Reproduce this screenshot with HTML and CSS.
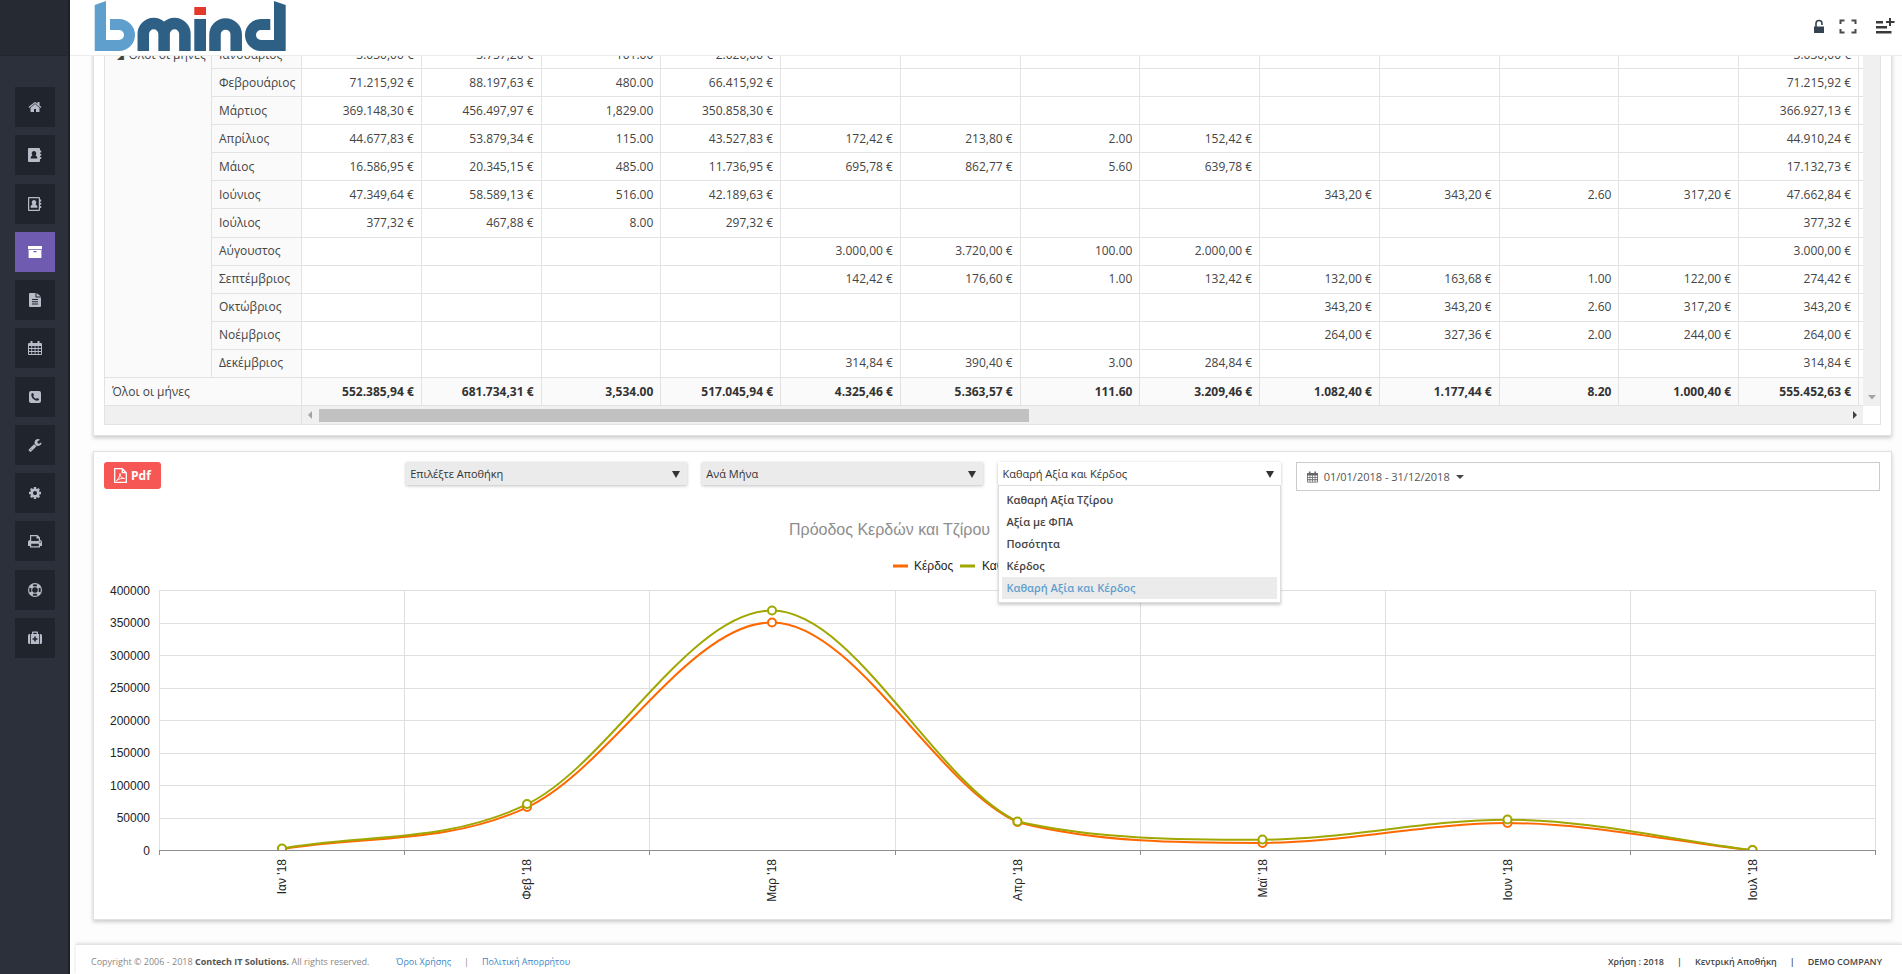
FILE: index.html
```
<!DOCTYPE html>
<html lang="el">
<head>
  <meta charset="utf-8">
  <title>bmind</title>
  <link rel="stylesheet" href="styles.css">
</head>
<body>
  <div class="page">
    <nav class="sidebar">
      <div class="sidebar-top"></div>
      <ul class="menu">
        <li><a href="#" aria-label="Αρχική"><svg viewBox="0 0 1792 1792"><path d="M1472 992v480q0 26-19 45t-45 19h-384v-384h-256v384h-384q-26 0-45-19t-19-45v-480q0-1 .5-3t.5-3l575-474 575 474q1 2 1 6zm223-69l-62 74q-8 9-21 11h-3q-13 0-21-7l-692-577-692 577q-12 8-24 7-13-2-21-11l-62-74q-8-10-7-23.5t11-21.5l719-599q32-26 76-26t76 26l244 204v-195q0-14 9-23t23-9h192q14 0 23 9t9 23v408l219 182q10 8 11 21.5t-7 23.5z"/></svg></a></li>
        <li><a href="#" aria-label="Πελάτες"><svg viewBox="0 0 14 14"><path fill-rule="evenodd" d="M1 0h10a1 1 0 0 1 1 1v1.500h1.200v2H12v1.200h1.200v2H12v1.300h1.200v2H12V13a1 1 0 0 1-1 1H1a1 1 0 0 1-1-1V1a1 1 0 0 1 1-1zM6 3a2.200 2.500 0 0 0-1.500 4.400C3.200 7.800 2.700 8.800 2.700 10.500h6.600c0-1.700-.5-2.700-1.800-3.100A2.200 2.500 0 0 0 6 3z"/></svg></a></li>
        <li><a href="#" aria-label="Προμηθευτές"><svg viewBox="0 0 14 14"><path fill-rule="evenodd" d="M1 0h10a1 1 0 0 1 1 1v1.500h1.200v2H12v1.200h1.200v2H12v1.300h1.200v2H12V13a1 1 0 0 1-1 1H1a1 1 0 0 1-1-1V1a1 1 0 0 1 1-1zM1.200 1.200v11.600h9.600V1.200z"/><path d="M6 3a2.200 2.500 0 0 0-1.500 4.400C3.200 7.800 2.500 8.800 2.500 10.800h7c0-2-.7-3-2-3.400A2.200 2.500 0 0 0 6 3z"/></svg></a></li>
        <li class="active"><a href="#" aria-label="Αποθήκη"><svg viewBox="0 0 14 14"><path fill-rule="evenodd" d="M0 1h14v3.200H0zM.6 5h12.800v8H.6zM5.500 6v1.200h3V6z"/></svg></a></li>
        <li><a href="#" aria-label="Παραστατικά"><svg viewBox="0 0 14 14"><path fill-rule="evenodd" d="M2 0h5.500v4.500H13V13a1 1 0 0 1-1 1H2a1 1 0 0 1-1-1V1a1 1 0 0 1 1-1zM4 6v1h6V6zm0 2.300v1h6v-1zm0 2.300v1h6v-1z"/><path d="M8.500 0L13 3.500H8.500z"/></svg></a></li>
        <li><a href="#" aria-label="Ημερολόγιο"><svg viewBox="0 0 14 14"><path fill-rule="evenodd" d="M1 2h1.500V0h2v2h5V0h2v2H13a1 1 0 0 1 1 1v10a1 1 0 0 1-1 1H1a1 1 0 0 1-1-1V3a1 1 0 0 1 1-1zM1 5v2h2.300V5zm3.200 0v2h2.400V5zm3.300 0v2h2.300V5zm3.200 0v2H13V5zM1 8v2h2.300V8zm3.200 0v2h2.400V8zm3.300 0v2h2.300V8zm3.200 0v2H13V8zM1 11v2h2.300v-2zm3.200 0v2h2.400v-2zm3.300 0v2h2.300v-2zm3.200 0v2H13v-2z"/></svg></a></li>
        <li><a href="#" aria-label="Τηλέφωνα"><svg viewBox="0 0 14 14"><path fill-rule="evenodd" d="M3 1h8a2 2 0 0 1 2 2v8a2 2 0 0 1-2 2H3a2 2 0 0 1-2-2V3a2 2 0 0 1 2-2zM5 3L3.400 3.800C2.600 7.500 6.500 11.400 10.200 10.600L11.200 9 9.200 7.900 8.100 8.800C6.800 8.200 5.700 7.200 5.200 5.900L6 4.900z"/></svg></a></li>
        <li><a href="#" aria-label="Εργαλεία"><svg viewBox="0 0 1792 1792"><path d="M448 1472q0-26-19-45t-45-19-45 19-19 45 19 45 45 19 45-19 19-45zm644-420l-682 682q-37 37-90 37-52 0-91-37l-106-108q-38-36-38-90 0-53 38-91l681-681q39 98 114.500 173.500t173.500 114.500zm634-435q0 39-23 106-47 134-164.500 217.500t-258.500 83.500q-185 0-316.500-131.500t-131.500-316.500 131.500-316.500 316.500-131.500q58 0 121.500 16.500t107.500 46.500q16 11 16 28t-16 28l-293 169v224l193 107q5-3 79-48.500t135.500-81 70.500-35.500q15 0 23.500 10t8.500 25z"/></svg></a></li>
        <li><a href="#" aria-label="Ρυθμίσεις"><svg viewBox="0 0 1792 1792"><path d="M1152 896q0-106-75-181t-181-75-181 75-75 181 75 181 181 75 181-75 75-181zm512-109v222q0 12-8 23t-20 13l-185 28q-19 54-39 91 35 50 107 138 10 12 10 25t-9 23q-27 37-99 108t-94 71q-12 0-26-9l-138-108q-44 23-91 38-16 136-29 186-7 28-36 28h-222q-14 0-24.500-8.500t-11.500-21.500l-28-184q-49-16-90-37l-141 107q-10 9-25 9-14 0-25-11-126-114-165-168-7-10-7-23 0-12 8-23 15-21 51-66.500t54-70.500q-27-50-41-99l-183-27q-13-2-21-12.500t-8-23.500v-222q0-12 8-23t19-13l186-28q14-46 39-92-40-57-107-138-10-12-10-24 0-10 9-23 26-36 98.500-107.500t94.500-71.500q13 0 26 10l138 107q44-23 91-38 16-136 29-186 7-28 36-28h222q14 0 24.500 8.500t11.500 21.500l28 184q49 16 90 37l142-107q9-9 24-9 13 0 25 10 129 119 165 170 7 8 7 22 0 12-8 23-15 21-51 66.500t-54 70.500q26 50 41 98l183 28q13 2 21 12.500t8 23.500z"/></svg></a></li>
        <li><a href="#" aria-label="Εκτυπώσεις"><svg viewBox="0 0 14 14"><path fill-rule="evenodd" d="M2 1h7.500L12 3.500V6a2 2 0 0 1 2 2v4h-2v1.500H2V12H0V8a2 2 0 0 1 2-2zM3.200 2.200V7h7.600V4.500H8.500V2.200zM3.200 9.800v2.500h7.600V9.800zM11.600 7.500v1.200h1.200V7.500z"/></svg></a></li>
        <li><a href="#" aria-label="Υποστήριξη"><svg viewBox="0 0 14 14"><path fill-rule="evenodd" d="M7 0a7 7 0 1 0 0 14A7 7 0 0 0 7 0zM7 4.200a2.800 2.800 0 1 1 0 5.600 2.800 2.800 0 0 1 0-5.600z"/><path class="cutout" d="M4.600 1.700a6 6 0 0 1 4.800 0L8.400 3.500a4 4 0 0 0-2.800 0zM4.600 12.300a6 6 0 0 0 4.800 0L8.400 10.500a4 4 0 0 1-2.800 0zM1.700 4.600a6 6 0 0 0 0 4.800L3.500 8.400a4 4 0 0 1 0-2.800zM12.300 4.600a6 6 0 0 1 0 4.800L10.500 8.400a4 4 0 0 0 0-2.800z"/></svg></a></li>
        <li><a href="#" aria-label="Service"><svg viewBox="0 0 14 14"><path fill-rule="evenodd" d="M4 3V1.500a1 1 0 0 1 1-1h4a1 1 0 0 1 1 1V3h1v10H3V3zM5.200 3h3.600V1.700H5.200zM6.200 5.500v1.700H4.500v1.600h1.700v1.700h1.600V8.800h1.700V7.200H7.800V5.500z"/><path d="M2.200 3v10H1.500A1.500 1.500 0 0 1 0 11.500v-7A1.500 1.500 0 0 1 1.500 3zM11.800 3v10h.7a1.500 1.500 0 0 0 1.500-1.500v-7A1.500 1.500 0 0 0 12.500 3z"/></svg></a></li>
      </ul>
    </nav>

    <div class="main">
      <header class="header">
        <a href="#" class="logo" aria-label="bmind">
          <svg width="192" height="52" viewBox="0 0 192 52">
            <path fill="#5f9fce" d="M.7 5L12 1v39h13a5 5 0 0 0 0-10h-9V19h9a16 16 0 0 1 0 32H.7z"/>
            <path fill="none" stroke="#2e5f84" stroke-width="11.500" d="M49.300 51V34a10.400 10.400 0 0 1 20.800 0v17M70.100 51V34a10.400 10.400 0 0 1 20.800 0v17M121 51V34.500a10.600 10.600 0 0 1 21.200 0V51"/>
            <path fill="#2e5f84" d="M100.300 19H112v32h-11.700zM191.700 5L180 1v39h-13a5 5 0 0 1 0-10h9.300V19H167a16 16 0 0 0 0 32h24.700z"/>
            <path fill="#e23a2a" d="M100.300 7H112v8h-11.700z"/>
          </svg>
        </a>
        <div class="header-tools">
          <button type="button" aria-label="Κλείδωμα"><svg width="12" height="15" viewBox="0 0 12 15"><path fill="#34434f" d="M1 7.500h10v6.500H1z"/><path fill="none" stroke="#34434f" stroke-width="1.600" d="M3 8V4.500a3 3 0 0 1 6 0V6"/></svg></button>
          <button type="button" aria-label="Πλήρης οθόνη"><svg width="18" height="15" viewBox="0 0 18 15"><path fill="none" stroke="#4a4a4e" stroke-width="2" d="M1.500 5V1.500H5.500M12.500 1.500h4V5M16.500 10v3.500h-4M5.500 13.500h-4V10"/></svg></button>
          <button type="button" class="tool-wide" aria-label="Νέα εγγραφή"><svg width="19" height="16" viewBox="0 0 19 16"><path fill="#3a3a3c" d="M0 3h7v2.500H0zM0 8h11v2.500H0zM0 13h15.500v2.500H0zM13 0h2v8h-2zM10 3h8.500v2H10z"/></svg></button>
        </div>
      </header>

      <div class="content">
        <section class="card card-pivot">
          <div class="pivot">
            <div class="pivot-body">
              <table class="pivot-table">
                <colgroup>
                  <col class="col-group"><col class="col-month">
                  <col span="13">
                  <col class="col-rest">
                </colgroup>
                <tbody>
                  <tr><th rowspan="12" class="group"><span class="twisty">◢</span>Όλοι οι μήνες</th><th>Ιανουάριος</th><td>3.030,00 €</td><td>3.757,20 €</td><td>101.00</td><td>2.020,00 €</td><td></td><td></td><td></td><td></td><td></td><td></td><td></td><td></td><td>3.030,00 €</td><td></td></tr>
                  <tr><th>Φεβρουάριος</th><td>71.215,92 €</td><td>88.197,63 €</td><td>480.00</td><td>66.415,92 €</td><td></td><td></td><td></td><td></td><td></td><td></td><td></td><td></td><td>71.215,92 €</td><td></td></tr>
                  <tr><th>Μάρτιος</th><td>369.148,30 €</td><td>456.497,97 €</td><td>1,829.00</td><td>350.858,30 €</td><td></td><td></td><td></td><td></td><td></td><td></td><td></td><td></td><td>366.927,13 €</td><td></td></tr>
                  <tr><th>Απρίλιος</th><td>44.677,83 €</td><td>53.879,34 €</td><td>115.00</td><td>43.527,83 €</td><td>172,42 €</td><td>213,80 €</td><td>2.00</td><td>152,42 €</td><td></td><td></td><td></td><td></td><td>44.910,24 €</td><td></td></tr>
                  <tr><th>Μάιος</th><td>16.586,95 €</td><td>20.345,15 €</td><td>485.00</td><td>11.736,95 €</td><td>695,78 €</td><td>862,77 €</td><td>5.60</td><td>639,78 €</td><td></td><td></td><td></td><td></td><td>17.132,73 €</td><td></td></tr>
                  <tr><th>Ιούνιος</th><td>47.349,64 €</td><td>58.589,13 €</td><td>516.00</td><td>42.189,63 €</td><td></td><td></td><td></td><td></td><td>343,20 €</td><td>343,20 €</td><td>2.60</td><td>317,20 €</td><td>47.662,84 €</td><td></td></tr>
                  <tr><th>Ιούλιος</th><td>377,32 €</td><td>467,88 €</td><td>8.00</td><td>297,32 €</td><td></td><td></td><td></td><td></td><td></td><td></td><td></td><td></td><td>377,32 €</td><td></td></tr>
                  <tr><th>Αύγουστος</th><td></td><td></td><td></td><td></td><td>3.000,00 €</td><td>3.720,00 €</td><td>100.00</td><td>2.000,00 €</td><td></td><td></td><td></td><td></td><td>3.000,00 €</td><td></td></tr>
                  <tr><th>Σεπτέμβριος</th><td></td><td></td><td></td><td></td><td>142,42 €</td><td>176,60 €</td><td>1.00</td><td>132,42 €</td><td>132,00 €</td><td>163,68 €</td><td>1.00</td><td>122,00 €</td><td>274,42 €</td><td></td></tr>
                  <tr><th>Οκτώβριος</th><td></td><td></td><td></td><td></td><td></td><td></td><td></td><td></td><td>343,20 €</td><td>343,20 €</td><td>2.60</td><td>317,20 €</td><td>343,20 €</td><td></td></tr>
                  <tr><th>Νοέμβριος</th><td></td><td></td><td></td><td></td><td></td><td></td><td></td><td></td><td>264,00 €</td><td>327,36 €</td><td>2.00</td><td>244,00 €</td><td>264,00 €</td><td></td></tr>
                  <tr><th>Δεκέμβριος</th><td></td><td></td><td></td><td></td><td>314,84 €</td><td>390,40 €</td><td>3.00</td><td>284,84 €</td><td></td><td></td><td></td><td></td><td>314,84 €</td><td></td></tr>
                </tbody>
                <tfoot>
                  <tr><th colspan="2">Όλοι οι μήνες</th><td>552.385,94 €</td><td>681.734,31 €</td><td>3,534.00</td><td>517.045,94 €</td><td>4.325,46 €</td><td>5.363,57 €</td><td>111.60</td><td>3.209,46 €</td><td>1.082,40 €</td><td>1.177,44 €</td><td>8.20</td><td>1.000,40 €</td><td>555.452,63 €</td><td></td></tr>
                </tfoot>
              </table>
              <div class="vscroll"><svg width="8" height="5" viewBox="0 0 8 5"><path fill="#a3a3a3" d="M0 0h8L4 4.500z"/></svg></div>
            </div>
            <div class="pivot-scroll">
              <div class="scroll-side"></div>
              <div class="hscroll">
                <svg width="4" height="8" viewBox="0 0 4 8"><path fill="#a3a3a3" d="M4 0v8L0 4z"/></svg>
                <div class="track"><div class="thumb"></div></div>
                <svg width="4" height="8" viewBox="0 0 4 8"><path fill="#404040" d="M0 0v8l4-4z"/></svg>
              </div>
              <div class="scroll-corner"></div>
            </div>
          </div>
        </section>

        <section class="card card-chart">
          <div class="toolbar">
            <div>
              <button type="button" class="btn-pdf"><svg width="13" height="15" viewBox="0 0 13 15"><path fill="none" stroke="#fff" stroke-width="1.300" d="M.7.7h7.600l4 4v9.600H.7zM8.300.7v4h4"/><path fill="none" stroke="#fff" d="M2.500 12.500C4.500 11 6 8 6 5.500 6 8.500 8 10.500 10.500 10.500 8 10 5 10.800 2.500 12.500z"/></svg>Pdf</button>
            </div>
            <div class="picker">
              <select aria-label="Αποθήκη"><option>Επιλέξτε Αποθήκη</option></select>
            </div>
            <div class="picker">
              <select aria-label="Περίοδος"><option>Ανά Μήνα</option></select>
            </div>
            <div class="picker open">
              <select aria-label="Μέγεθος"><option>Καθαρή Αξία και Κέρδος</option></select>
              <ul class="options">
                <li>Καθαρή Αξία Τζίρου</li>
                <li>Αξία με ΦΠΑ</li>
                <li>Ποσότητα</li>
                <li>Κέρδος</li>
                <li class="selected">Καθαρή Αξία και Κέρδος</li>
              </ul>
            </div>
            <button type="button" class="daterange">
              <svg width="11" height="12" viewBox="0 0 14 14"><path fill="#666" fill-rule="evenodd" d="M1 2h1.500V0h2v2h5V0h2v2H13a1 1 0 0 1 1 1v10a1 1 0 0 1-1 1H1a1 1 0 0 1-1-1V3a1 1 0 0 1 1-1zM1 5v2h2.300V5zm3.200 0v2h2.400V5zm3.300 0v2h2.300V5zm3.200 0v2H13V5zM1 8v2h2.300V8zm3.200 0v2h2.400V8zm3.300 0v2h2.300V8zm3.200 0v2H13V8zM1 11v2h2.300v-2zm3.200 0v2h2.400v-2zm3.300 0v2h2.300v-2zm3.200 0v2H13v-2z"/></svg>
              <span>01/01/2018 - 31/12/2018</span>
              <i class="caret"></i>
            </button>
          </div>

          <svg class="chart" viewBox="0 0 1776 409">
            <defs>
              <clipPath id="plot"><path d="M55 80h1717v270H55z"/></clipPath>
            </defs>
            <text class="chart-title" x="685" y="35">Πρόοδος Κερδών και Τζίρου</text>
            <path class="mark-profit" d="M789 66h15"/>
            <text x="810" y="70">Κέρδος</text>
            <path class="mark-net" d="M856 66h15"/>
            <text x="878" y="70">Καθαρή Αξία</text>

            <!-- grid -->
            <path class="grid" d="M55.500 90.500h1716M55.500 123.500h1716M55.500 155.500h1716M55.500 188.500h1716M55.500 220.500h1716M55.500 253.500h1716M55.500 285.500h1716M55.500 318.500h1716M55.500 90v260M300.500 90v260M545.500 90v260M791.500 90v260M1036.500 90v260M1281.500 90v260M1526.500 90v260M1771.500 90v260"/>
            <path class="axis" d="M55 350.500h1717M55.500 350v5M300.500 350v5M545.500 350v5M791.500 350v5M1036.500 350v5M1281.500 350v5M1526.500 350v5M1771.500 350v5"/>

            <g class="values">
              <text x="46" y="95">400000</text>
              <text x="46" y="127">350000</text>
              <text x="46" y="160">300000</text>
              <text x="46" y="192">250000</text>
              <text x="46" y="225">200000</text>
              <text x="46" y="257">150000</text>
              <text x="46" y="290">100000</text>
              <text x="46" y="322">50000</text>
              <text x="46" y="355">0</text>
            </g>

            <g clip-path="url(#plot)">
              <g class="line-profit">
                <path d="M178 349.200C259.700 335.200 341.300 345.100 423 307.300C504.700 269.500 586.300 122.400 668 122.400C749.700 122.400 831.800 285.400 913.500 322.200C995.200 342.900 1076.800 342.900 1158.500 342.900C1240.200 342.900 1321.800 323.100 1403.500 323.100C1485.200 323.100 1566.800 341.200 1648.500 350.300"/>
                <circle cx="178" cy="349" r="4"/><circle cx="423" cy="307" r="4"/><circle cx="668" cy="122.500" r="4"/><circle cx="913.500" cy="322" r="4"/><circle cx="1158.500" cy="343" r="4"/><circle cx="1403.500" cy="323" r="4"/><circle cx="1648.500" cy="350" r="4"/>
              </g>
              <g class="line-net">
                <path d="M178 348.500C259.700 333.700 341.300 343.900 423 304.200C504.700 264.600 586.300 110.600 668 110.600C749.700 110.600 831.800 283.300 913.500 321.500C995.200 339.700 1076.800 339.700 1158.500 339.700C1240.200 339.700 1321.800 319.700 1403.500 319.700C1485.200 319.700 1566.800 340.100 1648.500 350.300"/>
                <circle cx="178" cy="348.500" r="4"/><circle cx="423" cy="304" r="4"/><circle cx="668" cy="110.500" r="4"/><circle cx="913.500" cy="321.500" r="4"/><circle cx="1158.500" cy="339.500" r="4"/><circle cx="1403.500" cy="319.500" r="4"/><circle cx="1648.500" cy="350" r="4"/>
              </g>
            </g>

            <g class="months">
              <text transform="translate(182 359) rotate(-90)">Ιαν '18</text>
              <text transform="translate(427 359) rotate(-90)">Φεβ '18</text>
              <text transform="translate(672 359) rotate(-90)">Μαρ '18</text>
              <text transform="translate(918 359) rotate(-90)">Απρ '18</text>
              <text transform="translate(1163 359) rotate(-90)">Μαϊ '18</text>
              <text transform="translate(1408 359) rotate(-90)">Ιουν '18</text>
              <text transform="translate(1653 359) rotate(-90)">Ιουλ '18</text>
            </g>
          </svg>
        </section>
      </div>

      <footer class="footer">
        <div class="footer-left">
          <span class="copyright">Copyright © 2006 - 2018 <b>Contech IT Solutions.</b> All rights reserved.</span>
          <a href="#">Όροι Χρήσης</a>
          <span class="sep">|</span>
          <a href="#">Πολιτική Απορρήτου</a>
        </div>
        <div class="footer-right">
          <span>Χρήση : 2018</span>
          <span class="sep">|</span>
          <span>Κεντρική Αποθήκη</span>
          <span class="sep">|</span>
          <span>DEMO COMPANY</span>
        </div>
      </footer>
    </div>
  </div>
</body>
</html>
```
FILE: styles.css
```
* {
  box-sizing: border-box;
}

body {
  margin: 0;
  font-family: "Open Sans", "Noto Sans", sans-serif;
  font-size: 12px;
  color: #444;
  background: #fdfdfd;
}

ul {
  list-style: none;
  margin: 0;
  padding: 0;
}

button {
  font-family: inherit;
  cursor: pointer;
}

.page {
  display: flex;
  min-height: 100vh;
}

/* sidebar */
.sidebar {
  width: 70px;
  flex: none;
  background: #2b303b;
  border-right: 2px solid #1d2129;
}

.sidebar-top {
  height: 56px;
  background: #262a33;
  border-bottom: 1px solid #22262e;
}

.menu {
  display: flex;
  flex-direction: column;
  justify-content: space-between;
  min-height: 571px;
  margin-top: 31px;
  padding: 0 13px 0 15px;
}

.menu a {
  display: flex;
  align-items: center;
  justify-content: center;
  width: 40px;
  height: 40px;
  background: #20242d;
}

.menu svg {
  width: 14px;
  height: 14px;
  fill: #b9bcc8;
}

.menu .cutout {
  fill: #20242d;
}

.menu .active a {
  background: #6f5bb0;
}

.menu .active svg {
  fill: #fff;
}

/* header */
.main {
  flex: 1;
  min-width: 0;
  display: flex;
  flex-direction: column;
}

.header {
  position: relative;
  z-index: 2;
  display: flex;
  justify-content: space-between;
  height: 56px;
  padding: 0 7px 0 24px;
  background: #fff;
  border-bottom: 1px solid #ececec;
}

.header-tools {
  display: flex;
  align-items: center;
  gap: 14px;
  padding-bottom: 3px;
}

.header-tools button {
  display: flex;
  padding: 0;
  border: 0;
  background: none;
}

.header-tools .tool-wide {
  margin-left: 5px;
}

/* cards */
.content {
  padding: 0 10px 24px 23px;
  background: #fdfdfd;
}

.card {
  padding: 10px;
  background: #fff;
  border: 1px solid #dfe2e4;
  box-shadow: 0 2px 4px rgba(0, 0, 0, 0.2);
}

/* the page is scrolled, the first card runs under the header */
.card-pivot {
  margin-top: -27px;
  margin-bottom: 15px;
}

.card-chart {
  padding-right: 11px;
}

.pivot {
  border: 1px solid #e3e3e3;
}

.pivot-body {
  display: flex;
}

.pivot-table {
  flex: 1;
  width: 100%;
  height: 365px;
  table-layout: fixed;
  border-spacing: 0;
  line-height: 16px;
}

.col-group {
  width: 107px;
}

.col-month {
  width: 90px;
}

.col-rest {
  width: 4px;
}

.pivot-table th,
.pivot-table td {
  height: 28px;
  padding: 0 7px;
  border-right: 1px solid #e3e3e3;
  border-bottom: 1px solid #e3e3e3;
  text-align: right;
  white-space: nowrap;
}

.pivot-table th {
  background: #fafafa;
  font-weight: normal;
  text-align: left;
}

.pivot-table td:last-child {
  padding: 0;
  border-right: 0;
}

.pivot-table .group {
  vertical-align: top;
  padding-top: 6px;
  padding-left: 12px;
}

.twisty {
  margin-right: 4px;
  font-size: 9px;
}

.pivot-table tfoot td {
  background: #fafafa;
  color: #333;
  font-weight: bold;
}

.vscroll {
  width: 17px;
  flex: none;
  display: flex;
  align-items: flex-end;
  justify-content: center;
  padding-bottom: 6px;
  background: #f0f0f0;
}

.pivot-scroll {
  display: flex;
  height: 18px;
}

.scroll-side {
  width: 197px;
  background: #f0f0f0;
  border-right: 1px solid #e3e3e3;
}

.hscroll {
  flex: 1;
  display: flex;
  align-items: center;
  gap: 7px;
  padding: 0 6px;
  background: #f0f0f0;
}

.track {
  flex: 1;
}

.thumb {
  width: 46.5%;
  height: 13px;
  background: #c1c1c1;
}

.scroll-corner {
  width: 17px;
}

/* toolbar */
.toolbar {
  display: grid;
  grid-template-columns: 287fr 281fr 281fr 282fr 584fr;
  align-items: start;
  gap: 15px;
}

.btn-pdf {
  display: flex;
  align-items: center;
  gap: 4px;
  height: 27px;
  padding: 0 10px;
  border: 0;
  border-radius: 3px;
  background: #f75754;
  color: #fff;
  font-size: 12px;
  font-weight: bold;
}

.picker {
  position: relative;
}

.picker select {
  display: block;
  width: 100%;
  height: 23px;
  padding: 0 4px;
  appearance: none;
  border: 0;
  background: #ebebeb;
  box-shadow: 0 1px 3px rgba(0, 0, 0, 0.25);
  color: #333;
  font-family: inherit;
  font-size: 11px;
}

.picker::after {
  content: "";
  position: absolute;
  top: 9px;
  right: 7px;
  border: 4px solid transparent;
  border-top: 7px solid #333;
  border-bottom: 0;
}

.picker.open select {
  background: #fff;
}

.options {
  position: absolute;
  z-index: 1;
  top: 23px;
  left: 0;
  right: 0;
  padding: 3px;
  background: #fff;
  border: 1px solid #ddd;
  box-shadow: 0 2px 3px rgba(0, 0, 0, 0.2);
}

.options li {
  padding: 0 4px;
  line-height: 22px;
  font-size: 11px;
  font-weight: 600;
}

.options .selected {
  background: #ebebeb;
  color: #5f9fce;
}

.daterange {
  display: flex;
  align-items: center;
  gap: 6px;
  height: 29px;
  padding: 0 10px;
  background: #fff;
  border: 1px solid #ccc;
  color: #555;
  font-size: 11px;
}

.caret {
  border: 4px solid transparent;
  border-top-color: #444;
  border-bottom: 0;
}

/* chart */
.chart {
  display: block;
  width: 100%;
  margin-top: 9px;
  font-family: "Liberation Sans", Arial, sans-serif;
  font-size: 12px;
  fill: #232323;
}

.chart-title {
  font-size: 16px;
  fill: #8e8e8e;
}

.grid,
.axis {
  fill: none;
  stroke: #dfdfdf;
}

.axis {
  stroke: #8e8e8e;
}

.values,
.months {
  text-anchor: end;
}

.line-profit,
.line-net {
  fill: none;
  stroke-width: 2;
}

.line-profit,
.mark-profit {
  stroke: #ff6800;
}

.line-net,
.mark-net {
  stroke: #a0a700;
}

.mark-profit,
.mark-net {
  stroke-width: 3;
}

.chart circle {
  fill: #fff;
}

/* footer */
.footer {
  display: flex;
  justify-content: space-between;
  flex: 1;
  margin-left: 6px;
  padding: 9px 20px 0 15px;
  line-height: 16px;
  background: #fff;
  border-top: 1px solid #e3e3e3;
  box-shadow: 0 -1px 3px rgba(0, 0, 0, 0.12);
  font-size: 9px;
  color: #888;
}

.footer a {
  color: #3a87c8;
  text-decoration: none;
}

.footer b {
  color: #555;
}

.footer-left,
.footer-right {
  display: flex;
  gap: 13px;
}

.copyright {
  min-width: 292px;
}

.footer-right {
  color: #444;
  font-weight: 600;
}
```
